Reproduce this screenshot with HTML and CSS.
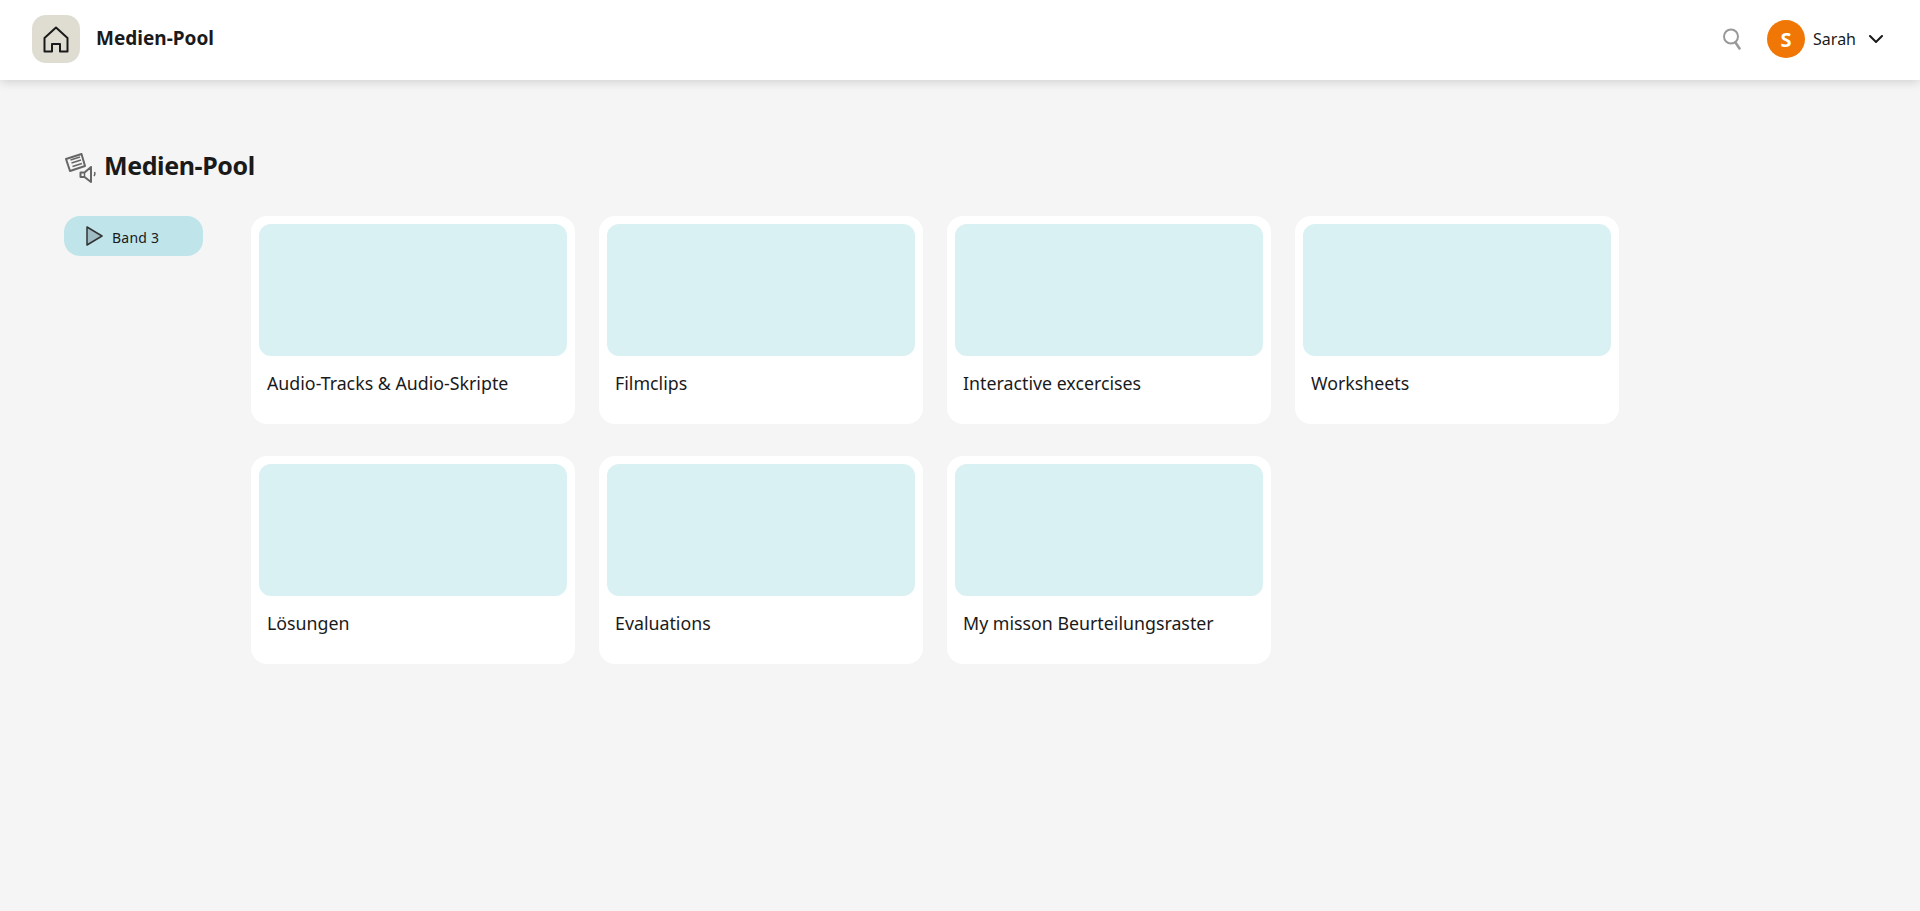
FILE: index.html
```html
<!DOCTYPE html>
<html lang="en">
<head>
    <meta charset="UTF-8">
    <meta name="viewport" content="width=device-width, initial-scale=1.0">
    <title>Medien-Pool</title>
    <link rel="stylesheet" href="styles.css">
</head>
<body>
    <header class="topbar">
        <div class="topbar-left">
            <a class="home-btn" href="#">
                <svg width="26" height="27" viewBox="0 0 26 27" fill="none" stroke="#1a1a1a" stroke-width="2" stroke-linejoin="round">
                    <path d="M1.500 12 13 1.500 24.500 12V25.500H17V18H9V25.500H1.500Z"/>
                </svg>
            </a>
            <span class="app-title">Medien-Pool</span>
        </div>
        <div class="topbar-right">
            <svg class="search-icon" width="18" height="22" viewBox="0 0 18 22" fill="none" stroke="#999" stroke-width="2">
                <circle cx="8" cy="8.500" r="7"/>
                <path d="M12.500 14.500 16.500 20.500" stroke-width="2.500" stroke-linecap="round"/>
            </svg>
            <div class="avatar">S</div>
            <span class="user-name">Sarah</span>
            <svg class="chevron" width="14" height="8" viewBox="0 0 14 8" fill="none" stroke="#1a1a1a" stroke-width="2" stroke-linecap="round">
                <path d="M1 1l6 6 6-6"/>
            </svg>
        </div>
    </header>

    <main class="content">
        <h1 class="page-title">
            <svg class="title-icon" width="31" height="30" viewBox="0 0 31 30" fill="none" stroke="#666" stroke-width="2" stroke-linejoin="round">
                <path d="M1 6 16.500 1 20 13 5 18Z"/>
                <path d="M5.500 7 15 4M6.500 10 16 7M7.500 13.500 17 10.500" stroke-width="1.500"/>
                <path d="M15.500 19.500h4l6.500-5.500v15l-6.500-5h-4Z"/>
                <path d="M19.500 19.500v4.500" stroke-width="1.500"/>
                <path d="M29.500 19q1 2-.5 4" stroke-width="1.500"/>
            </svg>
            <span>Medien-Pool</span>
        </h1>

        <div class="layout">
            <aside class="sidebar">
                <a class="band-pill" href="#">
                    <svg width="17" height="20" viewBox="0 0 17 20" fill="#9fbcc4" stroke="#333" stroke-width="1.500" stroke-linejoin="round">
                        <path d="M1 1 16 10 1 19Z"/>
                    </svg>
                    <span>Band 3</span>
                </a>
            </aside>

            <section class="card-grid">
                <div class="card"><div class="card-img"></div><p class="card-label">Audio-Tracks &amp; Audio-Skripte</p></div>
                <div class="card"><div class="card-img"></div><p class="card-label">Filmclips</p></div>
                <div class="card"><div class="card-img"></div><p class="card-label">Interactive excercises</p></div>
                <div class="card"><div class="card-img"></div><p class="card-label">Worksheets</p></div>
                <div class="card"><div class="card-img"></div><p class="card-label">Lösungen</p></div>
                <div class="card"><div class="card-img"></div><p class="card-label">Evaluations</p></div>
                <div class="card"><div class="card-img"></div><p class="card-label">My misson Beurteilungsraster</p></div>
            </section>
        </div>
    </main>
</body>
</html>
```

FILE: styles.css
```css
*{
    margin: 0; padding: 0;
    box-sizing: border-box;
}
body{
    min-height: 100vh;
    background: #f5f5f5;
    color: #1a1a1a;
    font-family: "Noto Sans", "Open Sans", sans-serif;
}
.topbar{
    display: flex;
    justify-content: space-between;
    align-items: center;
    height: 80px;
    padding: 0 37px 2px 32px;
    background: white;
    box-shadow: 0 2px 10px rgba(0,0,0,.15);
}
.topbar-left{
    display: flex;
    align-items: center;
    gap: 16px;
}
.home-btn{
    display: flex;
    justify-content: center;
    align-items: center;
    width: 48px;
    height: 48px;
    border-radius: 14px;
    background: #dfddd2;
}
.app-title{
    margin-bottom: 2px;
    font-size: 19px;
    font-weight: 700;
}
.topbar-right{
    display: flex;
    align-items: center;
}
.search-icon{
    margin-right: 26px;
}
.avatar{
    display: flex;
    justify-content: center;
    align-items: center;
    width: 38px;
    height: 38px;
    border-radius: 50%;
    background: #f07605;
    color: white;
    font-size: 20px;
    font-weight: 700;
}
.user-name{
    margin: 0 13px 0 8px;
    font-size: 16px;
}
.content{
    padding: 64px 64px 0 64px;
}
.page-title{
    display: flex;
    align-items: center;
    gap: 8px;
    height: 36px;
    padding-top: 6px;
    font-size: 25px;
    font-weight: 700;
    letter-spacing: -.4px;
}
.title-icon{
    margin: 6px 0 0 1px;
}
.layout{
    display: flex;
    gap: 48px;
    margin-top: 36px;
}
.sidebar{
    width: 139px;
    flex-shrink: 0;
}
.band-pill{
    display: flex;
    align-items: center;
    gap: 9px;
    height: 40px;
    padding-left: 22px;
    border-radius: 16px;
    background: #bfe4ea;
    color: #1a1a1a;
    font-size: 14px;
    letter-spacing: .25px;
    text-decoration: none;
}
.band-pill span{
    padding-top: 2px;
}
.card-grid{
    display: grid;
    grid-template-columns: repeat(4, 324px);
    column-gap: 24px;
    row-gap: 32px;
}
.card{
    height: 208px;
    padding: 8px;
    border-radius: 16px;
    background: white;
}
.card-img{
    height: 132px;
    border-radius: 12px;
    background: #d9f1f3;
}
.card-label{
    margin-top: 15px;
    padding-left: 8px;
    font-size: 17.800px;
}
```
